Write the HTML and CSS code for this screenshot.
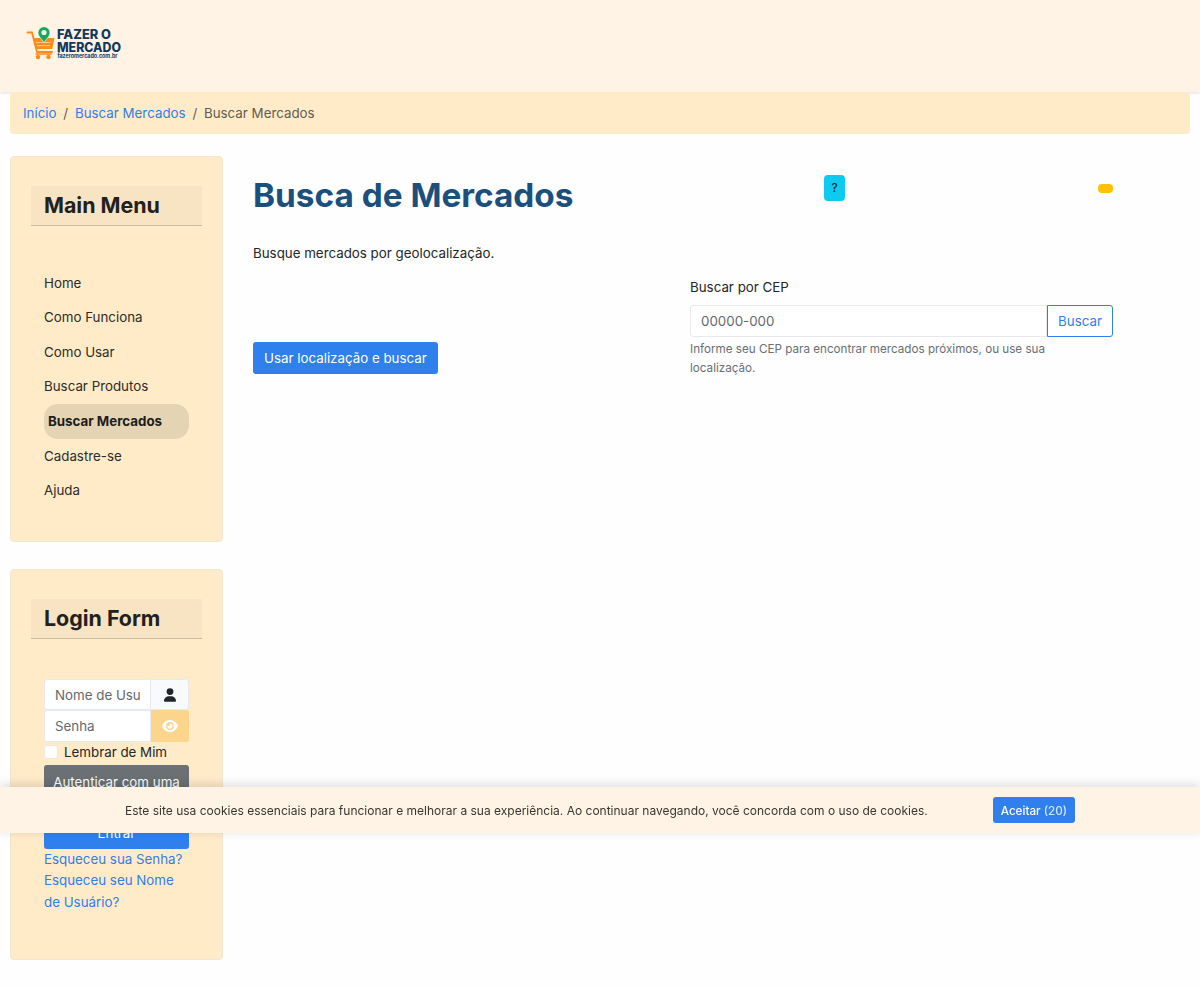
FILE: index.html
```html
<!DOCTYPE html>
<html lang="pt-br">
<head>
  <meta charset="UTF-8">
  <title>Busca de Mercados</title>
  <link rel="stylesheet" href="styles.css">
</head>
<body>

  <header class="site-header">
    <a href="#" class="brand">
      <svg width="110" height="40" viewBox="0 0 110 40">
        <!-- cart -->
        <path d="M1.500 6.500h4.500l5 19.500h15" fill="none" stroke="#fb8c1a" stroke-width="1.900" stroke-linecap="round" stroke-linejoin="round"/>
        <path d="M7 12h21.500l-2.200 11H10z" fill="#fb8c1a"/>
        <path d="M10 16.500h14.500M11 19.700h13" stroke="#ffdcb5" stroke-width="0.800"/>
        <path d="M10 28h15.500" stroke="#fb8c1a" stroke-width="1.500" stroke-linecap="round"/>
        <circle cx="12" cy="31" r="2.200" fill="#fb8c1a"/>
        <circle cx="22.500" cy="31" r="2.200" fill="#fb8c1a"/>
        <!-- pin -->
        <path d="M18 16.500C15 12.300 12 10 12 6.700a6 6 0 0 1 12 0c0 3.300-3 5.600-6 9.800z" fill="#16a75c" stroke="#fff3e6" stroke-width="0.700"/>
        <circle cx="18" cy="6.500" r="2.600" fill="#fff3e6"/>
        <text x="31" y="13.300" class="brand-name" textLength="54" lengthAdjust="spacingAndGlyphs">FAZER O</text>
        <text x="31" y="25.700" class="brand-name" textLength="64" lengthAdjust="spacingAndGlyphs">MERCADO</text>
        <text x="31.500" y="32.200" class="brand-url" textLength="60" lengthAdjust="spacingAndGlyphs">fazeromercado.com.br</text>
      </svg>
    </a>
  </header>

  <div class="container">
    <nav>
      <ol class="breadcrumb">
        <li><a href="#">Início</a></li>
        <li><a href="#">Buscar Mercados</a></li>
        <li>Buscar Mercados</li>
      </ol>
    </nav>

    <div class="layout">
      <aside class="sidebar">
        <div class="card card-menu">
          <h3 class="card-header">Main Menu</h3>
          <ul class="menu">
            <li><a href="#">Home</a></li>
            <li><a href="#">Como Funciona</a></li>
            <li><a href="#">Como Usar</a></li>
            <li><a href="#">Buscar Produtos</a></li>
            <li class="active"><a href="#">Buscar Mercados</a></li>
            <li><a href="#">Cadastre-se</a></li>
            <li><a href="#">Ajuda</a></li>
          </ul>
        </div>

        <div class="card card-login">
          <h3 class="card-header">Login Form</h3>
          <form class="login-form">
            <div class="input-group">
              <input type="text" class="form-control" placeholder="Nome de Usuário">
              <span class="input-addon">
                <svg width="12" height="14" viewBox="0 0 448 512"><path fill="currentColor" d="M224 256a128 128 0 1 0 0-256 128 128 0 1 0 0 256zm-45.700 48C79.800 304 0 383.800 0 482.300 0 498.700 13.300 512 29.700 512h388.600c16.400 0 29.700-13.300 29.700-29.700 0-98.500-79.800-178.300-178.300-178.300z"/></svg>
              </span>
            </div>
            <div class="input-group">
              <input type="password" class="form-control" placeholder="Senha">
              <button type="button" class="input-addon btn-eye">
                <svg width="16" height="14" viewBox="0 0 576 512"><path fill="currentColor" fill-rule="evenodd" d="M288 32C207 32 142 69 95 113 48 156 17 208 3 244c-3 8-3 17 0 25 14 35 45 87 92 131 47 43 112 80 193 80s146-37 193-80c47-44 78-96 93-131 3-8 3-17 0-25-15-36-46-88-93-131C434 69 369 32 288 32zM144 256a144 144 0 1 1 288 0 144 144 0 1 1-288 0zm144-64c0 35-29 64-64 64-7 0-14-1-20-3-6-2-12 2-12 7 0 7 1 14 3 21 14 51 66 82 118 68s82-67 68-118c-11-41-48-69-89-71-5 0-9 6-7 12 2 6 3 13 3 20z"/></svg>
              </button>
            </div>
            <label class="remember"><input type="checkbox"> Lembrar de Mim</label>
            <button type="button" class="btn btn-secondary">Autenticar com uma chave de acesso</button>
            <button type="button" class="btn btn-primary">Entrar</button>
            <a href="#">Esqueceu sua Senha?</a>
            <a href="#">Esqueceu seu Nome de Usuário?</a>
          </form>
        </div>
      </aside>

      <main class="content">
        <div class="title-row">
          <h1>Busca de Mercados</h1>
          <button class="btn-help">?</button>
          <span class="badge"></span>
        </div>
        <p class="intro">Busque mercados por geolocalização.</p>
        <div class="search-row">
          <button class="btn btn-primary btn-locate">Usar localização e buscar</button>
          <div class="cep">
            <label for="cep">Buscar por CEP</label>
            <div class="input-group">
              <input type="text" id="cep" class="form-control" placeholder="00000-000">
              <button class="btn btn-outline">Buscar</button>
            </div>
            <div class="form-text">Informe seu CEP para encontrar mercados próximos, ou use sua localização.</div>
          </div>
        </div>
      </main>
    </div>
  </div>

  <div class="cookie-bar">
    <span>Este site usa cookies essenciais para funcionar e melhorar a sua experiência. Ao continuar navegando, você concorda com o uso de cookies.</span>
    <button class="btn-accept">Aceitar <span>(20)</span></button>
  </div>

</body>
</html>
```
FILE: styles.css
```css
* {
  box-sizing: border-box;
}

body {
  margin: 0;
  min-height: 987px;
  font-family: Inter, sans-serif;
  font-size: 13.340px;
  line-height: 21.330px;
  color: #22262a;
  background-color: #fefefe;
}

a {
  color: #2f7eea;
  text-decoration: none;
}

button,
input {
  font: inherit;
  margin: 0;
}

h1,
h3,
p,
ul,
ol {
  margin: 0;
  padding: 0;
}

ul,
ol {
  list-style: none;
}

.site-header {
  height: 92px;
  padding: 26px 26px 0;
  background-color: #fff3e6;
  box-shadow: 0 1px 3px rgba(0, 0, 0, 0.12);
}

.brand svg {
  display: block;
}

.brand-name {
  font-size: 12.500px;
  font-weight: 800;
  fill: #12395b;
}

.brand-url {
  font-size: 5.500px;
  font-weight: 700;
  fill: #12395b;
}

.container {
  padding: 0 10px;
}

.breadcrumb {
  display: flex;
  height: 42px;
  padding: 11px 13px 9px;
  margin-bottom: 21.500px;
  background-color: #ffebc8;
  border-radius: 4px;
  color: #5f5b50;
}

.breadcrumb li + li::before {
  content: "/";
  padding: 0 6.800px;
}

.layout {
  display: flex;
  align-items: flex-start;
  gap: 30px;
}

.sidebar {
  width: 213px;
  display: grid;
  grid-template-columns: 100%;
  gap: 27px;
}

.card {
  padding: 29px 20px 0;
  background-color: #ffebc8;
  border: 1px solid #f3e6d0;
  border-radius: 4px;
}

.card-menu {
  height: 386.500px;
}

.card-login {
  height: 391px;
}

.card-header {
  height: 40.300px;
  padding: 6px 13px;
  font-size: 21.400px;
  font-weight: 700;
  line-height: 27px;
  color: #212121;
  background-color: #f8e4c2;
  border-bottom: 1px solid #c9baa0;
}

/* Sidebar menu */
.menu {
  padding: 40.200px 13px 0;
}

.menu li {
  height: 34.500px;
  padding: 6.700px 0 0;
}

.menu a {
  color: #2c2c29;
}

.menu .active {
  height: 35.300px;
  padding: 7.200px 4px 0;
  background-color: #e5d4b4;
  border-radius: 14px;
}

.menu .active a {
  font-weight: 700;
  color: #1d1d1b;
}

/* Login */
.login-form {
  display: flex;
  flex-direction: column;
  padding: 39.500px 13px 0;
}

.input-group {
  display: flex;
  height: 31.500px;
}

.form-control {
  flex: 1;
  min-width: 0;
  padding: 5px 10px 3px;
  color: #212529;
  background-color: #fff;
  border: 1px solid #e6e9ee;
  border-radius: 3px 0 0 3px;
}

.form-control::placeholder {
  color: #63686d;
  opacity: 1;
}

.input-addon {
  display: flex;
  align-items: center;
  justify-content: center;
  width: 38px;
  padding: 0;
  background-color: #f8fafd;
  border: 1px solid #e6e9ee;
  border-left: 0;
  border-radius: 0 3px 3px 0;
}

.btn-eye {
  color: #fff;
  background-color: #fcd58c;
  border-color: #fcd58c;
}

.remember {
  display: flex;
  align-items: center;
  gap: 6px;
}

.remember input {
  appearance: none;
  width: 14px;
  height: 14px;
  background-color: #fff;
  border: 1px solid #eee8df;
  border-radius: 3px;
}

.btn {
  padding: 5px 9px;
  color: #fff;
  border: 1px solid transparent;
  border-radius: 3px;
}

.btn-primary {
  background-color: #2f80ed;
}

.btn-secondary {
  height: 53px;
  margin-top: 1.800px;
  padding: 6px 4px 4px;
  background-color: #6a7074;
}

.btn-secondary + .btn-primary {
  height: 31px;
  padding: 4px 9px;
}

.btn-outline {
  padding: 5px 10px 3px;
  color: #2f80ed;
  background-color: #fff;
  border-color: #2f80ed;
  border-radius: 0 3px 3px 0;
}

/* Main column */
.content {
  flex: 1;
  padding-top: 18.500px;
}

.title-row {
  display: flex;
  align-items: flex-start;
  width: 860px;
}

h1 {
  width: 571px;
  font-size: 33.340px;
  font-weight: 700;
  line-height: 42px;
  color: #1b4f7d;
}

.btn-help {
  width: 21px;
  height: 26px;
  margin-top: 1px;
  padding: 2px 0 0;
  font-size: 11.670px;
  font-weight: 500;
  color: #0c2a31;
  background-color: #0dcaf0;
  border: 0;
  border-radius: 4px;
}

.badge {
  width: 15px;
  height: 9px;
  margin: 10px 0 0 auto;
  background-color: #ffc107;
  border-radius: 4px;
}

.intro {
  margin-top: 26.700px;
}

.search-row {
  display: flex;
  align-items: flex-end;
  justify-content: space-between;
  width: 860px;
  margin-top: 12.700px;
}

.btn-locate {
  height: 32px;
  margin-bottom: 3px;
  padding: 2px 10px 0;
}

.cep {
  width: 423px;
}

.cep label {
  display: block;
  margin-bottom: 7.200px;
}

.form-text {
  width: 360px;
  margin-top: 3.500px;
  font-size: 11.670px;
  line-height: 18.300px;
  color: #6a6f74;
}

/* Cookie notice, sits over the page */
.cookie-bar {
  position: fixed;
  top: 787px;
  left: 0;
  right: 0;
  display: flex;
  align-items: center;
  justify-content: center;
  gap: 65px;
  height: 46px;
  font-size: 12px;
  line-height: 21px;
  color: #3a352f;
  background-color: #fff3e6;
  box-shadow: 0 -2px 10px rgba(0, 0, 0, 0.15);
}

.btn-accept {
  height: 26px;
  padding: 2px 8px 0;
  color: #fff;
  font-size: 11.670px;
  font-weight: 500;
  background-color: #2f80ed;
  border: 0;
  border-radius: 3px;
}

.btn-accept span {
  opacity: 0.8;
}
```
